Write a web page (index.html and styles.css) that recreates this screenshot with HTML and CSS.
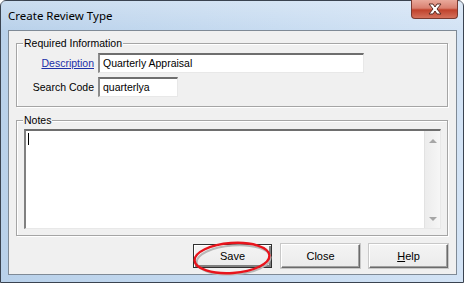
FILE: index.html
```html
<html>
<head>
    <title>Create Review Type</title>
    <link rel="stylesheet" href="styles.css">
</head>
<body>

<div class="window">

    <div class="titlebar">
        <span class="title">Create Review Type</span>
        <div class="closebtn">
            <svg width="16" height="12" viewBox="0 0 16 12">
                <path d="M2 1 L6 1 L8 4 L10 1 L14 1 L10 6 L14 11 L10 11 L8 8 L6 11 L2 11 L6 6 Z" fill="#ffffff" stroke="#5a2a22" stroke-width="1"/>
            </svg>
        </div>
    </div>

    <div class="client">

        <fieldset class="group">
            <legend>Required Information</legend>
            <div class="fields">
                <a href="#" class="label link">Description</a>
                <div class="input wide">Quarterly Appraisal</div>
                <span class="label">Search Code</span>
                <div class="input short">quarterlya</div>
            </div>
        </fieldset>

        <fieldset class="group notes">
            <legend>Notes</legend>
            <div class="memo">
                <div class="memotext"><span class="caret"></span></div>
                <div class="scrollbar">
                    <span class="arrow up"></span>
                    <span class="arrow down"></span>
                </div>
            </div>
        </fieldset>

        <div class="buttons">
            <button class="btn default">Save</button>
            <button class="btn">Close</button>
            <button class="btn"><u>H</u>elp</button>
        </div>

        <svg class="mark" width="84" height="40" viewBox="0 0 84 40">
            <ellipse cx="42" cy="20" rx="37" ry="14.5" fill="none" stroke="#b8b8b8" stroke-width="2" transform="rotate(-4 42 20) translate(1.5 2)"/>
            <ellipse cx="42" cy="20" rx="37.5" ry="15" fill="none" stroke="#e8141c" stroke-width="2.4" transform="rotate(-4 42 20)"/>
        </svg>

    </div>
</div>

</body>
</html>
```

FILE: styles.css
```css
body {
    margin: 0;
    font-family: "Liberation Sans", Arial, sans-serif;
    font-size: 10.5px;
}

.window {
    position: relative;
    width: 464px;
    height: 283px;
    box-sizing: border-box;
    border: solid 1px #3a4350;
    border-radius: 6px 6px 0 0;
    background: linear-gradient(to right, #b9d1ea, #c8dcf1 60%, #d3e3f5);
    display: flex;
    flex-direction: column;
}

.titlebar {
    height: 29px;
    display: flex;
    align-items: center;
    padding-left: 7px;
    background: linear-gradient(to bottom, rgba(255,255,255,0.25), rgba(255,255,255,0));
}

.title {
    font-family: "Noto Sans", sans-serif;
    font-size: 11.5px;
    color: #000000;
    flex: 1;
}

.closebtn {
    align-self: flex-start;
    margin-top: -1px;
    margin-right: 5px;
    width: 47px;
    height: 19px;
    box-sizing: border-box;
    border: solid 1px #7a3a30;
    border-top: none;
    border-radius: 0 0 4px 4px;
    background: linear-gradient(to bottom, #e9a99b, #d98070 45%, #c0422c 55%, #d4715c);
    display: flex;
    align-items: center;
    justify-content: center;
}

.client {
    position: relative;
    flex: 1;
    margin: 0 6px 7px 7px;
    border: solid 1px #7f8a96;
    background: #f0f0f0;
    padding: 6px 8px 0 7px;
}

.group {
    margin: 0;
    padding: 0;
    border: solid 1px #a5a5a5;
    box-shadow: inset 1px 1px 0 #ffffff, 1px 1px 0 #ffffff;
    min-inline-size: 0;
}

.group legend {
    margin-left: 6px;
    padding: 0 1px;
    line-height: 13px;
    background: #f0f0f0;
    color: #000000;
}

.fields {
    display: grid;
    grid-template-columns: 77px auto;
    grid-auto-rows: 20px;
    row-gap: 4px;
    column-gap: 4px;
    margin-top: 3px;
    padding-bottom: 9px;
}

.label {
    justify-self: end;
    align-self: center;
    color: #000000;
}

.link {
    color: #1c2fa8;
    text-decoration: underline;
}

.input {
    box-sizing: border-box;
    height: 20px;
    line-height: 16px;
    padding-left: 3px;
    background: #ffffff;
    border-top: solid 2px #6e6e6e;
    border-left: solid 2px #8c8c8c;
    border-bottom: solid 1px #e8e8e8;
    border-right: solid 1px #e8e8e8;
    color: #000000;
}

.wide {
    width: 266px;
}

.short {
    width: 80px;
}

.notes {
    margin-top: 7px;
}

.memo {
    display: flex;
    height: 100px;
    box-sizing: border-box;
    margin: 2px 6px 6px 7px;
    background: #ffffff;
    border-top: solid 2px #6e6e6e;
    border-left: solid 2px #808080;
    border-bottom: solid 1px #e8e8e8;
    border-right: solid 1px #e8e8e8;
}

.memotext {
    flex: 1;
    padding: 2px 0 0 2px;
}

.caret {
    display: block;
    width: 1px;
    height: 12px;
    background: #000000;
}

.scrollbar {
    width: 16px;
    display: flex;
    flex-direction: column;
    justify-content: space-between;
    align-items: center;
    padding: 8px 0 7px 0;
    box-sizing: border-box;
    background: linear-gradient(to right, #ececec, #f6f6f6);
    border-left: solid 1px #e2e2e2;
}

.arrow {
    width: 0;
    height: 0;
    border-left: solid 4px transparent;
    border-right: solid 4px transparent;
}

.arrow.up {
    border-bottom: solid 4px #a6a6a6;
}

.arrow.down {
    border-top: solid 4px #a6a6a6;
}

.buttons {
    display: flex;
    justify-content: flex-end;
    gap: 9px;
    margin-top: 8px;
}

.btn {
    width: 79px;
    height: 24px;
    margin: 0;
    padding: 0;
    font-family: "Liberation Sans", Arial, sans-serif;
    font-size: 11px;
    color: #000000;
    background: linear-gradient(to bottom, #f4f4f4, #ebebeb);
    border-top: solid 1px #ffffff;
    border-left: solid 1px #ffffff;
    border-right: solid 1px #6b6b6b;
    border-bottom: solid 1px #6b6b6b;
    box-shadow: inset -1px -1px 0 #a0a0a0, 0 0 0 1px #c8c8c8;
}

.btn.default {
    border: solid 1px #303030;
    box-shadow: inset 1px 1px 0 #ffffff, inset -2px -2px 0 #808080;
}

.mark {
    position: absolute;
    left: 181px;
    top: 207px;
}
```
